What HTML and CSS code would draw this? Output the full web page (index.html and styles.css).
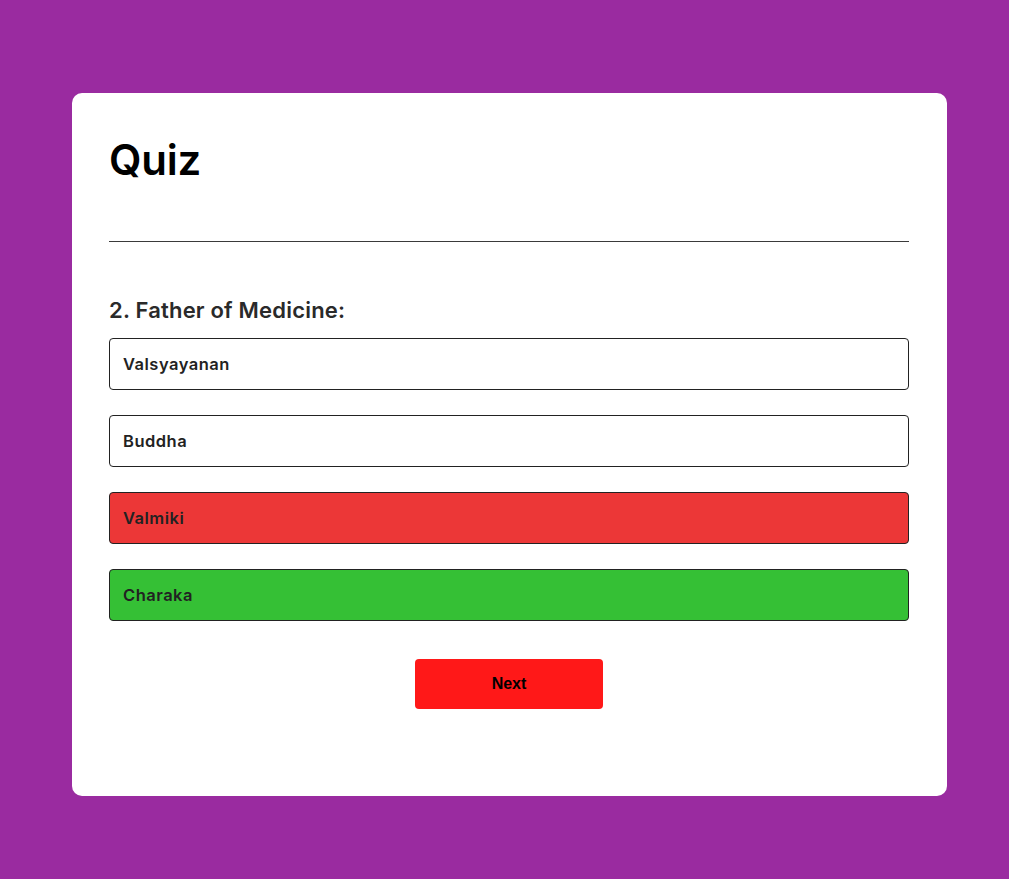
FILE: index.html
```html
<!DOCTYPE html>
<html lang="en">
<head>
<meta charset="utf-8">
<title>Quiz</title>
<link rel="stylesheet" href="styles.css">
</head>
<body>
<div class="page">
  <div class="card">
    <h1 class="title">Quiz</h1>
    <hr class="rule">
    <h2 class="question">2. Father of Medicine:</h2>
    <div class="options">
      <button class="option">Valsyayanan</button>
      <button class="option">Buddha</button>
      <button class="option wrong">Valmiki</button>
      <button class="option correct">Charaka</button>
    </div>
    <div class="actions">
      <button class="next">Next</button>
    </div>
  </div>
</div>
</body>
</html>
```

FILE: styles.css
```css
* { box-sizing: border-box; }
html, body { margin: 0; padding: 0; }
body {
  background: #9a2ba0;
  font-family: "Inter", "Open Sans", sans-serif;
  min-height: 879px;
}
.page {
  padding: 93px 62px 0 72px;
}
.card {
  background: #ffffff;
  border-radius: 10px;
  padding: 37px 38px 87px 37px;
}
.title {
  margin: 0;
  font-size: 42px;
  line-height: 60px;
  font-weight: 600;
  color: #000;
  letter-spacing: -0.2px;
}
.rule {
  margin: 51px 0 0 0;
  border: 0;
  border-top: 1px solid #3a3a3a;
  height: 0;
}
.question {
  margin: 50px 0 10px 0;
  font-size: 22px;
  line-height: 36px;
  font-weight: 600;
  color: #2a2a2a;
  letter-spacing: 0.2px;
}
.options {
  display: flex;
  flex-direction: column;
  gap: 25px;
}
.option {
  display: block;
  width: 100%;
  height: 52px;
  text-align: left;
  padding: 0 13px;
  background: #ffffff;
  border: 1px solid #222;
  border-radius: 4px;
  font-family: "Inter", "Open Sans", sans-serif;
  font-size: 16.5px;
  font-weight: 600;
  letter-spacing: 0.5px;
  color: #222;
}
.option.wrong { background: #ec3737; }
.option.correct { background: #35c035; }
.actions {
  display: flex;
  justify-content: center;
  margin-top: 38px;
}
.next {
  width: 188px;
  height: 50px;
  border: 0;
  border-radius: 4px;
  background: #ff1818;
  color: #000;
  font-family: "Liberation Sans", Arial, sans-serif;
  font-size: 16px;
  font-weight: 700;
}
```
